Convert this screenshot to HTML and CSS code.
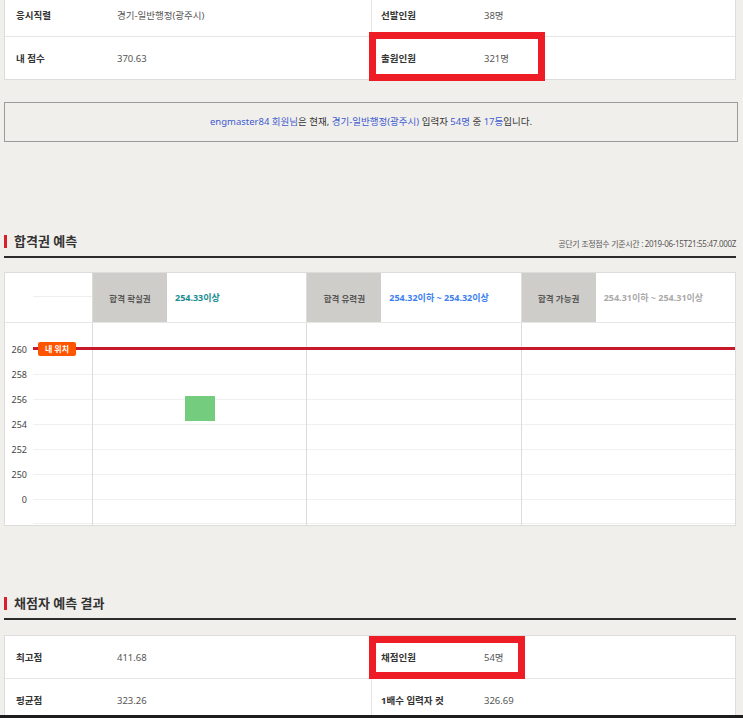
FILE: index.html
```html
<!DOCTYPE html>
<html lang="ko">
<head>
<meta charset="utf-8">
<title>합격 예측</title>
<link rel="stylesheet" href="styles.css">
</head>
<body>
<div class="page">
  <div class="info info--top">
    <div class="info-row">
      <div class="info-half"><span class="info-label">응시직렬</span><span class="info-value">경기-일반행정(광주시)</span></div>
      <div class="info-half"><span class="info-label">선발인원</span><span class="info-value">38명</span></div>
    </div>
    <div class="info-row">
      <div class="info-half"><span class="info-label">내 점수</span><span class="info-value">370.63</span></div>
      <div class="info-half"><span class="info-label">출원인원</span><span class="info-value">321명</span></div>
    </div>
  </div>

  <p class="notice"><span class="hl">engmaster84 회원님</span>은 현재, <span class="hl">경기-일반행정(광주시)</span> 입력자 <span class="hl">54명</span> 중 <span class="hl">17등</span>입니다.</p>

  <div class="section-head">
    <h2 class="section-title">합격권 예측</h2>
    <span class="section-meta">공단기 조정점수 기준시간 : 2019-06-15T21:55:47.000Z</span>
  </div>

  <div class="chart">
    <div class="chart-head">
      <div class="axis-head"><div class="axis-head-line"></div></div>
      <div class="band"><span class="band-label">합격 확실권</span><span class="band-value band-value--sure">254.33이상</span></div>
      <div class="band"><span class="band-label">합격 유력권</span><span class="band-value band-value--likely">254.32이하 ~ 254.32이상</span></div>
      <div class="band"><span class="band-label">합격 가능권</span><span class="band-value band-value--possible">254.31이하 ~ 254.31이상</span></div>
    </div>
    <div class="plot">
      <ul class="ticks">
        <li class="tick"><span class="tick-label">260</span><span class="tick-line"></span></li>
        <li class="tick"><span class="tick-label">258</span><span class="tick-line"></span></li>
        <li class="tick"><span class="tick-label">256</span><span class="tick-line"></span></li>
        <li class="tick"><span class="tick-label">254</span><span class="tick-line"></span></li>
        <li class="tick"><span class="tick-label">252</span><span class="tick-line"></span></li>
        <li class="tick"><span class="tick-label">250</span><span class="tick-line"></span></li>
        <li class="tick"><span class="tick-label">0</span><span class="tick-line"></span></li>
      </ul>
      <div class="plot-cols"><div></div><div></div><div></div><div></div></div>
      <div class="bar" style="left:180px; top:73px; height:25px;"></div>
      <div class="marker" style="top:24px;"><span class="marker-tag">내 위치</span></div>
    </div>
  </div>

  <div class="section-head section-head--second">
    <h2 class="section-title">채점자 예측 결과</h2>
  </div>

  <div class="info info--bottom">
    <div class="info-row">
      <div class="info-half"><span class="info-label">최고점</span><span class="info-value">411.68</span></div>
      <div class="info-half"><span class="info-label">채점인원</span><span class="info-value">54명</span></div>
    </div>
    <div class="info-row">
      <div class="info-half"><span class="info-label">평균점</span><span class="info-value">323.26</span></div>
      <div class="info-half"><span class="info-label">1배수 입력자 컷</span><span class="info-value">326.69</span></div>
    </div>
  </div>

  <span class="callout callout--applicants"></span>
  <span class="callout callout--graders"></span>
</div>
<div class="window-edge"></div>
</body>
</html>
```

FILE: styles.css
```css
* { box-sizing: border-box; }

body {
  margin: 0;
  background: #f1efeb;
  font-family: "Noto Sans", "Noto Sans CJK KR", sans-serif;
  color: #333;
}

.page {
  display: flow-root;
  position: relative;
  padding: 0 7px 0 4px;
}

/* summary tables */
.info {
  background: #fff;
  border: 1px solid #dcdcdc;
}
.info--top { margin-top: -7px; }
.info--bottom { margin-top: 15px; }

.info-row {
  display: grid;
  grid-template-columns: 366px 1fr;
  height: 42px;
}
.info-row + .info-row {
  height: 43px;
  border-top: 1px solid #e6e6e6;
}

.info-half {
  display: grid;
  grid-template-columns: 112px 1fr;
  align-items: center;
}
.info-half + .info-half { border-left: 1px solid #e6e6e6; }

.info-label {
  padding-left: 11px;
  font-size: 9.5px;
  font-weight: 700;
  color: #333;
}
.info-half + .info-half .info-label { padding-left: 9px; }

.info-value {
  font-size: 9.5px;
  color: #555;
}

/* rank notice */
.notice {
  margin: 22px -2px 0 0;
  height: 40px;
  border: 1px solid #9a9a9a;
  text-align: center;
  line-height: 37px;
  font-size: 9.5px;
  color: #333;
}
.notice .hl { color: #3d5bd0; }

/* section headings */
.section-head {
  margin-top: 89px;
  height: 27px;
  padding-bottom: 5px;
  display: flex;
  align-items: center;
  justify-content: space-between;
  border-bottom: 2px solid #2b2b2b;
}
.section-head--second { margin-top: 67px; }

.section-title {
  margin: 0;
  display: flex;
  align-items: center;
  gap: 7px;
  font-size: 13px;
  font-weight: 700;
  color: #333;
  line-height: 20px;
}
.section-title::before {
  content: "";
  width: 3px;
  height: 13px;
  background: #d8202c;
}

.section-meta {
  align-self: flex-end;
  margin-bottom: 2px;
  font-size: 8px;
  letter-spacing: -0.3px;
  color: #555;
}

/* prediction chart */
.chart {
  margin-top: 14px;
  background: #fff;
  border: 1px solid #dcdcdc;
}

.chart-head {
  display: grid;
  grid-template-columns: 87px 1fr 1fr 1fr;
  height: 50px;
  border-bottom: 1px solid #e6e6e6;
}

.axis-head { padding-left: 28px; }
.axis-head-line {
  height: 24px;
  border-bottom: 1px solid #eeeeee;
}

.band {
  display: flex;
  border-left: 1px solid #dcdcdc;
}
.band-label {
  flex: 0 0 74px;
  background: #cfcdc9;
  display: flex;
  align-items: center;
  justify-content: center;
  font-size: 8.5px;
  font-weight: 700;
  color: #555;
}
.band-value {
  display: flex;
  align-items: center;
  padding-left: 8px;
  font-size: 9px;
  font-weight: 700;
}
.band-value--sure { color: #1b8c8f; }
.band-value--likely { color: #3d80ee; }
.band-value--possible { color: #aaaaaa; }

.plot {
  position: relative;
  height: 202px;
}

.ticks {
  list-style: none;
  margin: 0;
  padding: 14px 0 0;
}
.ticks::after {
  content: "";
  display: block;
  margin: 11px 0 0 28px;
  border-top: 1px solid #f0f0f0;
}
.tick {
  display: flex;
  align-items: center;
  height: 25px;
}
.tick-label {
  width: 22px;
  margin-right: 6px;
  text-align: right;
  font-size: 9px;
  color: #444;
}
.tick-line {
  flex: 1;
  border-top: 1px solid #f0f0f0;
}

.plot-cols {
  position: absolute;
  inset: 0;
  display: grid;
  grid-template-columns: 87px 1fr 1fr 1fr;
  pointer-events: none;
}
.plot-cols > div + div { border-left: 1px solid #dcdcdc; }

.bar {
  position: absolute;
  width: 30px;
  background: #74cc7e;
}

.marker {
  position: absolute;
  left: 28px;
  right: 0;
  height: 3px;
  background: #c8182c;
  display: flex;
  align-items: center;
}
.marker-tag {
  margin-left: 5px;
  flex: 0 0 auto;
  height: 14px;
  width: 38px;
  border-radius: 2px;
  background: #ff5500;
  color: #fff;
  font-size: 8px;
  font-weight: 700;
  display: flex;
  align-items: center;
  justify-content: center;
}

/* highlight boxes drawn over the tables */
.callout {
  position: absolute;
  left: 369px;
  border: 7px solid #ee1c25;
}
.callout--applicants { top: 32px; width: 176px; height: 49px; }
.callout--graders { top: 636px; width: 156px; height: 43px; }

.window-edge {
  position: fixed;
  left: 0;
  right: 0;
  bottom: 0;
  height: 3px;
  background: #1d1d1d;
}
```
